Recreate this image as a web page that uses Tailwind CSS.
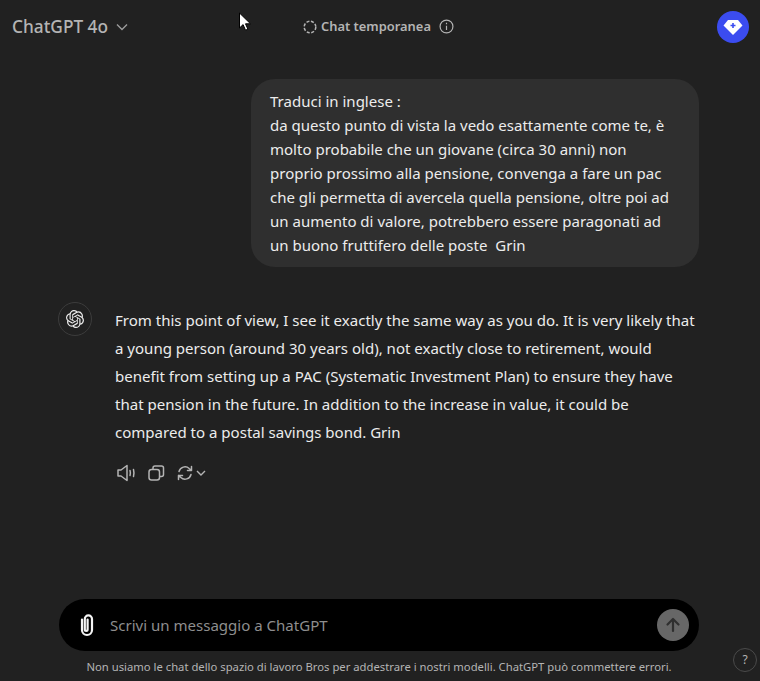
<!DOCTYPE html>
<html>
<head>
<meta charset="utf-8">
<script src="https://cdn.jsdelivr.net/npm/@tailwindcss/browser@4"></script>
</head>
<body class="bg-[#212121] font-['Noto_Sans',sans-serif] text-[#ececec] overflow-hidden">
<div class="relative w-[760px] h-[681px] flex flex-col">
  <!-- Header -->
  <header class="h-[54px] flex items-center pl-3 pr-[11px] shrink-0">
    <div class="w-[291px] flex items-center gap-[7px] text-[17.3px] font-medium text-[#b4b4b4]">
      <span>ChatGPT 4o</span>
      <svg width="14" height="14" viewBox="0 0 14 14" fill="none" stroke="#9b9b9b" stroke-width="1.4"><path d="M2 4.5l5 5 5-5"/></svg>
    </div>
    <div class="flex items-center gap-[4px] text-[12.9px] font-semibold text-[#b4b4b4] whitespace-nowrap">
      <svg width="14" height="14" viewBox="0 0 14 14" fill="none" stroke="#b4b4b4" stroke-width="1.5" stroke-dasharray="3 1.6"><circle cx="7" cy="7" r="5.8"/></svg>
      <span>Chat temporanea</span>
      <svg class="ml-[4px]" width="15" height="15" viewBox="0 0 14 14" fill="none" stroke="#b4b4b4" stroke-width="1.1"><circle cx="7" cy="7" r="6"/><path d="M7 6.2v4M7 3.6v1.2"/></svg>
    </div>
    <div class="ml-auto w-8 h-8 rounded-full bg-[#3b4cf0] flex items-center justify-center shrink-0">
      <svg width="20" height="17" viewBox="0 0 20 17"><path d="M5 1h10L19.5 6.5 10 16 .5 6.5z" fill="#fff"/><path d="M10 4v5M7.5 6.5h5" stroke="#3b4cf0" stroke-width="1.6"/></svg>
    </div>
  </header>

  <!-- User message -->
  <div class="flex justify-end pr-[61px] mt-[25px]">
    <div class="w-[448px] h-[188px] bg-[#2f2f2f] rounded-[24px] pl-[19px] pr-[20px] pt-[10px] text-[15.03px] leading-[24px] whitespace-pre-wrap">Traduci in inglese :
da questo punto di vista la vedo esattamente come te, è molto probabile che un giovane (circa 30 anni) non proprio prossimo alla pensione, convenga a fare un pac che gli permetta di avercela quella pensione, oltre poi ad un aumento di valore, potrebbero essere paragonati ad un buono fruttifero delle poste  Grin</div>
  </div>

  <!-- Assistant message -->
  <div class="flex pl-[58px] pr-[61px] mt-[35px] gap-[23px]">
    <div class="w-[34px] h-[34px] rounded-full border border-[#3c3c3c] flex items-center justify-center shrink-0">
      <svg width="18" height="18" viewBox="0 0 24 24" fill="#ececec"><path d="M22.2819 9.8211a5.9847 5.9847 0 0 0-.5157-4.9108 6.0462 6.0462 0 0 0-6.5098-2.9A6.0651 6.0651 0 0 0 4.9807 4.1818a5.9847 5.9847 0 0 0-3.9977 2.9 6.0462 6.0462 0 0 0 .7427 7.0966 5.98 5.98 0 0 0 .511 4.9107 6.051 6.051 0 0 0 6.5146 2.9001A5.9847 5.9847 0 0 0 13.2599 24a6.0557 6.0557 0 0 0 5.7718-4.2058 5.9894 5.9894 0 0 0 3.9977-2.9001 6.0557 6.0557 0 0 0-.7475-7.0729zm-9.022 12.6081a4.4755 4.4755 0 0 1-2.8764-1.0408l.1419-.0804 4.7783-2.7582a.7948.7948 0 0 0 .3927-.6813v-6.7369l2.02 1.1686a.071.071 0 0 1 .038.052v5.5826a4.504 4.504 0 0 1-4.4945 4.4944zm-9.6607-4.1254a4.4708 4.4708 0 0 1-.5346-3.0137l.142.0852 4.783 2.7582a.7712.7712 0 0 0 .7806 0l5.8428-3.3685v2.3324a.0804.0804 0 0 1-.0332.0615L9.74 19.9502a4.4992 4.4992 0 0 1-6.1408-1.6464zM2.3408 7.8956a4.485 4.485 0 0 1 2.3655-1.9728V11.6a.7664.7664 0 0 0 .3879.6765l5.8144 3.3543-2.0201 1.1685a.0757.0757 0 0 1-.071 0l-4.8303-2.7865A4.504 4.504 0 0 1 2.3408 7.872zm16.5963 3.8558L13.1038 8.364 15.1192 7.2a.0757.0757 0 0 1 .071 0l4.8303 2.7913a4.4944 4.4944 0 0 1-.6765 8.1042v-5.6772a.79.79 0 0 0-.407-.667zm2.0107-3.0231l-.142-.0852-4.7735-2.7818a.7759.7759 0 0 0-.7854 0L9.409 9.2297V6.8974a.0662.0662 0 0 1 .0284-.0615l4.8303-2.7866a4.4992 4.4992 0 0 1 6.6802 4.66zM8.3065 12.863l-2.02-1.1638a.0804.0804 0 0 1-.038-.0567V6.0742a4.4992 4.4992 0 0 1 7.3757-3.4537l-.142.0805L8.704 5.459a.7948.7948 0 0 0-.3927.6813zm1.0976-2.3654l2.602-1.4998 2.6069 1.4998v2.9994l-2.5974 1.4997-2.6067-1.4997Z"/></svg>
    </div>
    <div class="flex-1 pt-[4px]">
      <p class="text-[15.04px] leading-[28px]">From this point of view, I see it exactly the same way as you do. It is very likely that a young person (around 30 years old), not exactly close to retirement, would benefit from setting up a PAC (Systematic Investment Plan) to ensure they have that pension in the future. In addition to the increase in value, it could be compared to a postal savings bond. Grin</p>
      <div class="flex items-center gap-[11px] mt-[18px] ml-[2px]">
        <svg width="19" height="18" viewBox="0 0 19 18" fill="none" stroke="#b4b4b4" stroke-width="1.5" stroke-linejoin="round" stroke-linecap="round"><path d="M1 6h3l6-4.5v15L4 12H1z"/><path d="M13 6.5c.5 1.6.5 3.4 0 5M16.5 5.5c.6 2.3.6 4.7 0 7"/></svg>
        <svg width="18" height="18" viewBox="0 0 18 18" fill="none" stroke="#b4b4b4" stroke-width="1.5" stroke-linejoin="round"><rect x="6" y="2" width="10.5" height="10.5" rx="2"/><rect x="2" y="5.5" width="10.5" height="10.5" rx="2.5" fill="#212121"/></svg>
        <div class="flex items-center gap-[1px]">
          <svg width="18" height="18" viewBox="0 0 18 18" fill="none" stroke="#b4b4b4" stroke-width="1.5" stroke-linecap="round" stroke-linejoin="round"><path d="M3 7.5a6.2 6.2 0 0 1 10.2-3L15.5 6.5M15.5 2.5v4h-4M15 10.5a6.2 6.2 0 0 1-10.2 3L2.5 11.5M2.5 15.5v-4h4"/></svg>
          <svg width="12" height="12" viewBox="0 0 12 12" fill="none" stroke="#b4b4b4" stroke-width="1.4"><path d="M2 4l4 4 4-4"/></svg>
        </div>
      </div>
    </div>
  </div>

  <!-- Composer -->
  <div class="mt-auto pl-[59px] pr-[61px]">
    <div class="h-[52px] rounded-[26px] bg-black flex items-center pl-[17px] pr-[10px]">
      <svg width="22" height="24" viewBox="0 0 22 24" fill="none" stroke="#f4f4f4" stroke-width="2.2" stroke-linecap="round"><path d="M6 6.5v10.5a5 5 0 0 0 10 0V6a3.6 3.6 0 0 0-7.2 0v10.5a1.4 1.4 0 0 0 2.8 0V6.5"/></svg>
      <span class="ml-[12px] text-[15.04px] text-[#8e8e8e]">Scrivi un messaggio a ChatGPT</span>
      <div class="ml-auto w-8 h-8 rounded-full bg-[#676767] flex items-center justify-center">
        <svg width="18" height="18" viewBox="0 0 18 18" fill="none" stroke="#2f2f2f" stroke-width="2.2" stroke-linecap="round" stroke-linejoin="round"><path d="M9 15V3M3.5 8.5L9 3l5.5 5.5"/></svg>
      </div>
    </div>
  </div>
  <p class="h-[30px] pt-[8px] pr-[2px] text-center text-[11.27px] text-[#b4b4b4]">Non usiamo le chat dello spazio di lavoro Bros per addestrare i nostri modelli. ChatGPT può commettere errori.</p>

  <!-- Help button -->
  <div class="absolute left-[733px] top-[648px] w-[24px] h-[24px] rounded-full border border-[#4a4a4a] flex items-center justify-center text-[12px] text-[#b4b4b4]">?</div>

  <!-- Mouse cursor -->
  <svg class="absolute left-[238px] top-[12px]" width="14" height="20" viewBox="0 0 14 20"><path d="M1.5 1v15l3.6-3.4 2.4 5.6 2.4-1-2.4-5.4h5z" fill="#fff" stroke="#000" stroke-width="1"/></svg>
</div>
</body>
</html>
